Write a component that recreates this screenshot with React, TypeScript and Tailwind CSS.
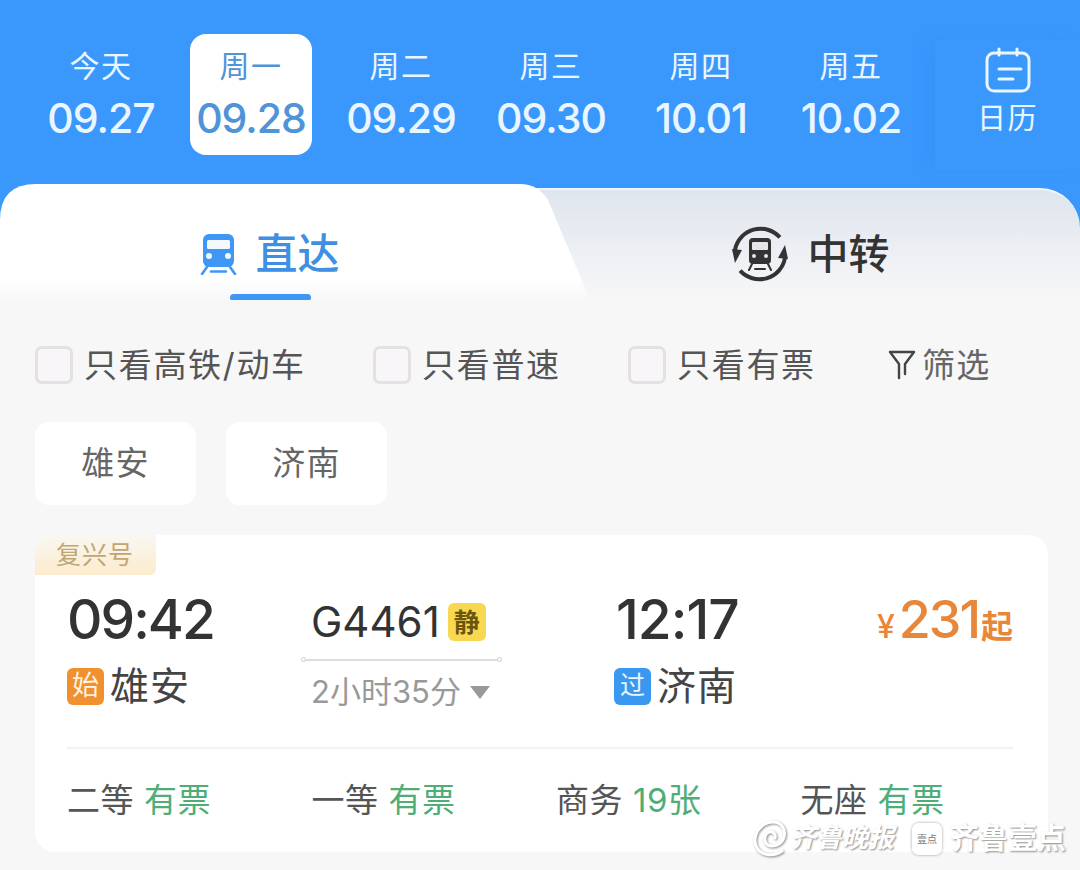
import React from 'react'

const dates = [
  { label: '今天', date: '09.27' },
  { label: '周一', date: '09.28', active: true },
  { label: '周二', date: '09.29' },
  { label: '周三', date: '09.30' },
  { label: '周四', date: '10.01' },
  { label: '周五', date: '10.02' },
]

const seats = [
  { name: '二等', left: '有票' },
  { name: '一等', left: '有票' },
  { name: '商务', left: '19张' },
  { name: '无座', left: '有票' },
]

function TrainIcon() {
  return (
    <svg width="37" height="41" viewBox="0 0 37 41" fill="none">
      <rect x="3" y="0" width="31" height="33" rx="6" fill="#3f97f5" />
      <rect x="7" y="6" width="23" height="9" rx="1.5" fill="#f4f9ff" />
      <circle cx="9" cy="22" r="3" fill="#f4f9ff" />
      <circle cx="28" cy="22" r="3" fill="#f4f9ff" />
      <path d="M7 33L2 40M30 33L35 40M11 37.5H26" stroke="#3f97f5" strokeWidth="2.6" strokeLinecap="round" />
    </svg>
  )
}

function TransferIcon() {
  return (
    <svg width="56" height="56" viewBox="0 0 56 56" fill="none">
      <path d="M47.9 11.3A26 26 0 0 0 3 24" stroke="#333" strokeWidth="4" />
      <path d="M8.1 44.7A26 26 0 0 0 53 32" stroke="#333" strokeWidth="4" />
      <path d="M0 23L10 24L3 37Z" fill="#333" />
      <path d="M56 33L46 32L53 19Z" fill="#333" />
      <rect x="17" y="12" width="22" height="26" rx="4" fill="#333" />
      <rect x="20" y="16" width="16" height="8" rx="1" fill="#e4e6ea" />
      <circle cx="22" cy="30" r="2" fill="#e4e6ea" />
      <circle cx="34" cy="30" r="2" fill="#e4e6ea" />
      <path d="M20 38L17 44M36 38L39 44M23 43H33" stroke="#333" strokeWidth="2" strokeLinecap="round" />
    </svg>
  )
}

function CalendarIcon() {
  return (
    <svg width="46" height="46" viewBox="0 0 46 46" fill="none" stroke="#eaf6ff" strokeWidth="3" strokeLinecap="round">
      <rect x="2" y="6" width="42" height="38" rx="7" />
      <path d="M14 2V8M32 2V8M14 22H36M14 32H28" />
    </svg>
  )
}

function FunnelIcon() {
  return (
    <svg width="28" height="30" viewBox="0 0 28 30" fill="none" stroke="#444" strokeWidth="2.4" strokeLinecap="round" strokeLinejoin="round">
      <path d="M2 2H26L17 14V24M2 2L11 14V28" />
    </svg>
  )
}

function SwirlIcon() {
  return (
    <svg width="36" height="38" viewBox="0 0 36 38" fill="none" stroke="#fff" strokeWidth="3" strokeLinecap="round" className="[filter:drop-shadow(1px_1px_1px_rgba(0,0,0,0.45))]">
      <path d="M30 31C22 37 8 36 4 26C0 15 8 3 20 2C29 1 34 9 32 17C30 24 22 28 16 25C11 22 12 14 17 12C21 11 24 14 23 18" />
    </svg>
  )
}

function Checkbox({ label, className }: { label: string; className: string }) {
  return (
    <div className={`flex items-center gap-[11px] ${className}`}>
      <div className="w-[38px] h-[38px] rounded-[7px] border-[3px] border-[#e4e1e2] bg-[#f8f6f8]" />
      <span className="text-[33px] leading-[40px] tracking-[1.7px] text-[#555]">{label}</span>
    </div>
  )
}

export default function App() {
  return (
    <div className="relative w-[1080px] h-[870px] overflow-hidden bg-[#f7f7f8] font-['Inter','Noto_Sans_CJK_SC',sans-serif]">
      {/* date strip */}
      <div className="flex h-[230px] bg-[#3a98fd] pl-[26px] pt-[34px]">
        {dates.map((d) => (
          <div key={d.date} className="w-[150px] flex justify-center">
            <div
              className={`w-[122px] h-[121px] rounded-[16px] flex flex-col items-center pt-[12px] ${
                d.active ? 'bg-white text-[#4f93d8]' : 'text-[#eaf6ff]'
              }`}
            >
              <span className="text-[30px] leading-[40px] tracking-[1.5px] whitespace-nowrap">{d.label}</span>
              <span className="text-[41px] leading-[50px] tracking-[-1px] font-medium mt-[7px] whitespace-nowrap">{d.date}</span>
            </div>
          </div>
        ))}
        <div className="flex-1 h-[130px] mt-[6px] ml-[9px] flex flex-col items-center pt-[7px] shadow-[-10px_0_18px_rgba(20,90,200,0.08)]">
          <CalendarIcon />
          <span className="text-[29px] leading-[36px] mt-[8px] tracking-[1.5px] text-[#eaf6ff]">日历</span>
        </div>
      </div>

      {/* tabs */}
      <div className="flex h-[116px] -mt-[46px]">
        <div className="relative z-10 flex-none w-[590px] h-[116px] bg-gradient-to-b from-white from-[82%] to-[#f7f7f8] [clip-path:path('M0_116L0_36Q0_0_36_0L520_0Q538_0_548_16L590_116Z')]">
          <div className="w-[540px] flex flex-col items-center pt-[46px]">
            <div className="flex items-center gap-[18px] h-[48px]">
              <TrainIcon />
              <span className="text-[42px] leading-[48px] font-medium text-[#3f8fe2]">直达</span>
            </div>
            <div className="w-[81px] h-[7px] rounded-full bg-[#3f97f5] mt-[16px]" />
          </div>
        </div>
        <div className="flex-1 -ml-[90px] mt-[4px] rounded-tr-[40px] border-t-2 border-[#f0f6ff] bg-gradient-to-b from-[#dfe5ee] to-[#f7f7f8] flex items-start justify-center pl-[41px] pt-[36px] gap-[20px]">
          <TransferIcon />
          <span className="text-[41px] leading-[56px] font-medium text-[#333]">中转</span>
        </div>
      </div>

      {/* filters */}
      <div className="flex items-center h-[40px] mt-[45px] pl-[35px]">
        <Checkbox label="只看高铁/动车" className="w-[338px]" />
        <Checkbox label="只看普速" className="w-[255px]" />
        <Checkbox label="只看有票" className="w-[260px]" />
        <div className="flex items-center gap-[6px]">
          <FunnelIcon />
          <span className="text-[33px] leading-[40px] tracking-[1.2px] text-[#666]">筛选</span>
        </div>
      </div>

      {/* station chips */}
      <div className="flex gap-[30px] mt-[37px] pl-[35px]">
        <div className="w-[161px] h-[83px] rounded-[14px] bg-white flex items-center justify-center text-[33px] tracking-[1.2px] text-[#666]">雄安</div>
        <div className="w-[161px] h-[83px] rounded-[14px] bg-white flex items-center justify-center text-[33px] tracking-[1.2px] text-[#666]">济南</div>
      </div>

      {/* train card */}
      <div className="relative w-[1013px] h-[317px] ml-[35px] mt-[30px] rounded-[20px] bg-white pl-[32px] pr-[35px] pt-[52px]">
        <div className="absolute left-0 top-0 w-[121px] h-[40px] rounded-tl-[20px] rounded-br-[6px] bg-gradient-to-b from-[#f9f7f2] to-[#fdebcd] pl-[21px] text-[25px] leading-[40px] tracking-[1px] text-[#bfa673]">
          复兴号
        </div>

        <div className="flex items-start">
          <div className="w-[234px] flex-none">
            <div className="text-[55px] leading-[64px] tracking-[-2px] font-medium text-[#333]">09:42</div>
            <div className="flex items-center gap-[6px] mt-[13px]">
              <span className="w-[37px] h-[37px] rounded-[6px] bg-[#f0902f] flex items-center justify-center text-[27px] text-[#fff3e2]">始</span>
              <span className="text-[39px] leading-[44px] tracking-[1px] text-[#444]">雄安</span>
            </div>
          </div>

          <div className="w-[201px] flex-none">
            <div className="flex items-center gap-[8px] pl-[10px] pt-[6px] h-[64px]">
              <span className="text-[42px] leading-[48px] text-[#333]">G4461</span>
              <span className="w-[38px] h-[38px] rounded-[6px] bg-[#f8d850] flex items-center justify-center text-[26px] font-bold text-[#6b5510]">静</span>
            </div>
            <div className="flex items-center mt-[6px]">
              <span className="w-[5px] h-[5px] rounded-full border border-[#ccc]" />
              <span className="flex-1 h-[2px] bg-[#dcdcdf]" />
              <span className="w-[5px] h-[5px] rounded-full border border-[#ccc]" />
            </div>
            <div className="flex items-center pl-[10px] mt-[8px]">
              <span className="text-[31px] leading-[44px] text-[#999] whitespace-nowrap">2小时35分</span>
              <svg width="20" height="13" viewBox="0 0 20 13" className="ml-[9px] flex-none">
                <path d="M0 0H20L10 13Z" fill="#999" />
              </svg>
            </div>
          </div>

          <div className="ml-[114px] flex-none">
            <div className="text-[55px] leading-[64px] tracking-[-1px] font-medium text-[#333]">12:17</div>
            <div className="flex items-center gap-[6px] mt-[13px] -ml-[2px]">
              <span className="w-[37px] h-[37px] rounded-[6px] bg-[#3a98f0] flex items-center justify-center text-[25px] text-[#eaf6ff]">过</span>
              <span className="text-[39px] leading-[44px] tracking-[1px] text-[#444]">济南</span>
            </div>
          </div>

          <div className="ml-auto flex items-baseline text-[#e8873a] pt-[2px]">
            <span className="text-[32px] font-medium">¥</span>
            <span className="text-[52px] leading-[62px] tracking-[-2px] font-medium ml-[4px]">231</span>
            <span className="text-[32px] font-bold ml-[2px]">起</span>
          </div>
        </div>

        <div className="h-[2px] bg-[#f2f2f3] mt-[33px]" />

        <div className="flex mt-[29px]">
          {seats.map((s) => (
            <div key={s.name} className="w-[244.5px] flex-none flex gap-[10px] text-[33px] leading-[44px] tracking-[0.5px]">
              <span className="text-[#555]">{s.name}</span>
              <span className="text-[#4fae78]">{s.left}</span>
            </div>
          ))}
        </div>
      </div>

      {/* watermark */}
      <div className="absolute left-[752px] top-[818px] flex items-center h-[42px] text-white [text-shadow:1px_1px_2px_rgba(0,0,0,0.45)]">
        <div className="w-[38px]">
          <SwirlIcon />
        </div>
        <span className="text-[26px] leading-[42px] italic font-bold w-[122px] whitespace-nowrap font-['Liberation_Serif','Noto_Sans_CJK_SC',serif]">齐鲁晚报</span>
        <span className="w-[30px] h-[32px] rounded-[7px] bg-white/90 shadow-[0_0_3px_rgba(0,0,0,0.4)] flex items-center justify-center text-[10px] text-[#777] [text-shadow:none] whitespace-nowrap">壹点</span>
        <span className="text-[29px] leading-[42px] font-bold ml-[8px] whitespace-nowrap">齐鲁壹点</span>
      </div>
    </div>
  )
}
